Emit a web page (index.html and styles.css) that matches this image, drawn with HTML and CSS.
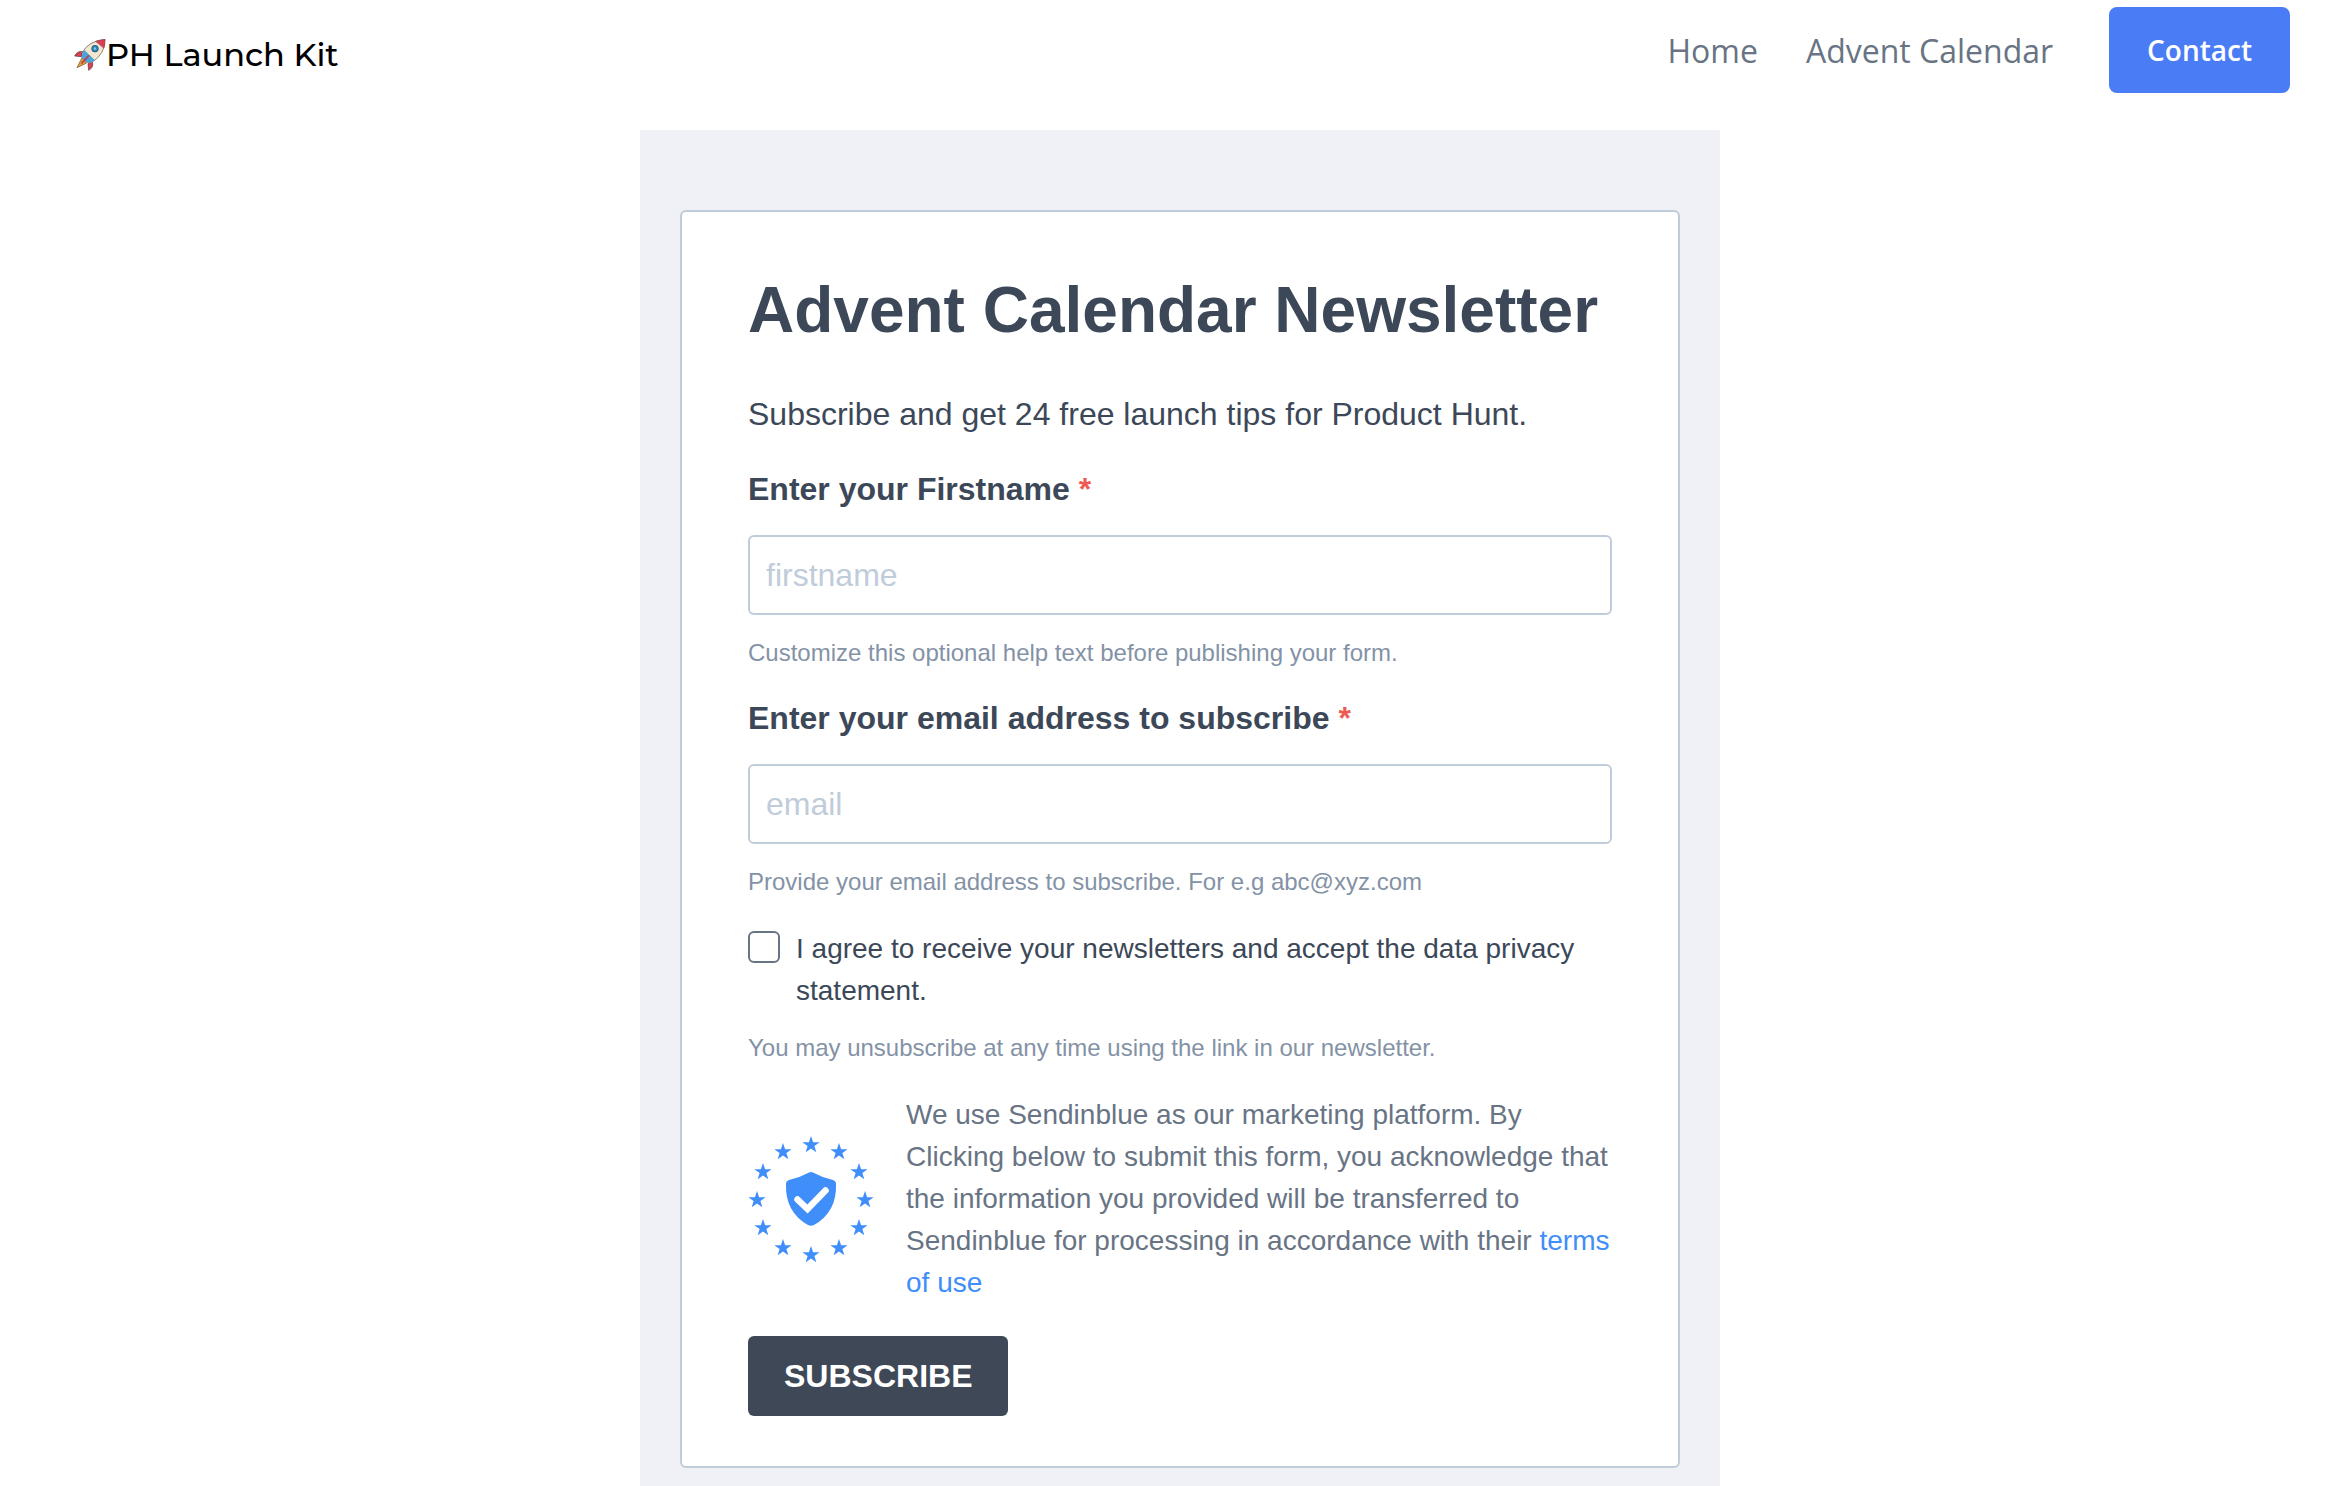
FILE: index.html
```html
<!DOCTYPE html>
<html lang="en">
<head>
  <meta charset="UTF-8">
  <meta name="viewport" content="width=device-width, initial-scale=1.0">
  <title>PH Launch Kit</title>
  <link rel="stylesheet" href="styles.css">
</head>
<body>
  <header class="navbar">
    <a class="brand" href="#">
      <svg class="brand-icon" viewBox="0 0 96 96" aria-hidden="true">
        <path d="M28 38 Q10 34 2 51 L22 53 Z" fill="#d9404f" stroke="#5b3440" stroke-width="2"/>
        <path d="M54 66 Q62 84 44 94 L42 74 Z" fill="#d9404f" stroke="#5b3440" stroke-width="2"/>
        <path d="M24 56 L9 86 L38 72 Z" fill="#e8a03c" stroke="#6b4a2b" stroke-width="2"/>
        <path d="M24 42 Q42 6 93 1 Q94 44 54 70 L40 70 L24 55 Z" fill="#f3e6cf" stroke="#5b5350" stroke-width="2"/>
        <path d="M64 7 Q80 2 93 1 Q94 14 90 28 Z" fill="#d9404f" stroke="#5b3440"/>
        <path d="M31 33 L62 63 L52 71 L38 70 L24 56 L24 44 Z" fill="#49a5d8"/>
        <circle cx="63" cy="29" r="10" fill="#2d7fae" stroke="#23506e" stroke-width="2"/>
        <circle cx="63" cy="29" r="4" fill="#7cc3e6"/>
        <path d="M45 49 L22 74" stroke="#b8404f" stroke-width="5"/>
      </svg>
      <span>PH Launch Kit</span>
    </a>
    <nav class="nav-links">
      <a href="#">Home</a>
      <a href="#">Advent Calendar</a>
      <a class="btn-contact" href="#">Contact</a>
    </nav>
  </header>

  <main class="page">
    <div class="form-wrap">
      <form class="card">
        <h1>Advent Calendar Newsletter</h1>
        <p class="intro">Subscribe and get 24 free launch tips for Product Hunt.</p>

        <!-- First name -->
        <div class="field">
          <label for="firstname">Enter your Firstname <span class="required">*</span></label>
          <input type="text" id="firstname" placeholder="firstname" required>
          <p class="help">Customize this optional help text before publishing your form.</p>
        </div>

        <!-- Email -->
        <div class="field">
          <label for="email">Enter your email address to subscribe <span class="required">*</span></label>
          <input type="email" id="email" placeholder="email" required>
          <p class="help">Provide your email address to subscribe. For e.g abc@xyz.com</p>
        </div>

        <!-- Opt-in -->
        <div class="optin">
          <input type="checkbox" id="optin">
          <label for="optin">I agree to receive your newsletters and accept the data privacy statement.</label>
        </div>
        <p class="help optin-help">You may unsubscribe at any time using the link in our newsletter.</p>

        <div class="declaration">
          <svg class="shield" viewBox="0 0 126 126" aria-hidden="true">
            <defs>
              <path id="star" d="M0 -9 L2.1 -2.8 L8.6 -2.8 L3.4 1.1 L5.3 7.3 L0 3.6 L-5.3 7.3 L-3.4 1.1 L-8.6 -2.8 L-2.1 -2.8 Z"/>
            </defs>
            <g fill="#3f8efa">
              <use href="#star" x="63" y="9"/>
              <use href="#star" x="91" y="16"/>
              <use href="#star" x="111" y="36"/>
              <use href="#star" x="117" y="64"/>
              <use href="#star" x="111" y="92"/>
              <use href="#star" x="91" y="112"/>
              <use href="#star" x="63" y="119"/>
              <use href="#star" x="35" y="112"/>
              <use href="#star" x="15" y="92"/>
              <use href="#star" x="9" y="64"/>
              <use href="#star" x="15" y="36"/>
              <use href="#star" x="35" y="16"/>
              <path d="M61 36.5 Q63 35.5 65 36.5 Q74 41.5 85 44 Q88 45 88 48 Q89 76 66 89 Q63 90.5 60 89 Q37 76 38 48 Q38 45 41 44 Q52 41.5 61 36.5 Z"/>
            </g>
            <path d="M49.5 63.5 L59.5 73 L77.500 54.5" fill="none" stroke="#fff" stroke-width="6.5" stroke-linecap="round"/>
          </svg>
          <p>We use Sendinblue as our marketing platform. By Clicking below to submit this form, you acknowledge that the information you provided will be transferred to Sendinblue for processing in accordance with their <a href="#">terms of use</a></p>
        </div>

        <button type="submit">SUBSCRIBE</button>
      </form>
    </div>
  </main>
</body>
</html>
```
FILE: styles.css
```css
* {
  box-sizing: border-box;
}
body {
  margin: 0;
  min-height: 100vh;
  display: flex;
  flex-direction: column;
  background: #fff;
  color: #3c4858;
  font-family: Helvetica, "Liberation Sans", Arial, sans-serif;
}
h1, p {
  margin: 0;
}
a {
  text-decoration: none;
}

/* Navbar */
.navbar {
  display: flex;
  justify-content: space-between;
  align-items: flex-start;
  padding: 7px 54px 37px 74px;
}
.brand {
  display: flex;
  align-items: center;
  padding-top: 27px;
  color: #000;
  font-family: Montserrat, Inter, sans-serif;
  font-size: 32px;
  font-weight: 500;
  line-height: 42px;
}
.brand-icon {
  width: 32px;
  height: 32px;
}
.nav-links {
  display: flex;
  align-items: center;
  gap: 48px;
  font-family: "Open Sans", "Noto Sans", sans-serif;
  font-size: 32px;
}
.nav-links a {
  color: #687484;
}
.nav-links .btn-contact {
  margin-left: 8px;
  padding: 22px 38px;
  border-radius: 8px;
  background: #4a7cf6;
  color: #fff;
  font-size: 28px;
  font-weight: 600;
  line-height: 42px;
}

/* Form */
.page {
  flex: 1;
  display: flex;
  justify-content: center;
  padding-left: 16px;
}
.form-wrap {
  width: 100%;
  max-width: 1080px;
  padding: 80px 40px 18px;
  background: #eff1f6;
}
.card {
  padding: 50px 66px;
  background: #fff;
  border: 2px solid #c0ccd9;
  border-radius: 6px;
}
h1 {
  margin-bottom: 32px;
  font-size: 64px;
  line-height: 96px;
}
.intro {
  margin-bottom: 27px;
  font-size: 32px;
  line-height: 48px;
}
.field {
  margin-bottom: 23px;
}
.field label {
  display: block;
  margin-bottom: 22px;
  font-size: 32px;
  font-weight: 700;
  line-height: 48px;
}
.required {
  color: #ee5a52;
}
.field input {
  display: block;
  width: 100%;
  height: 80px;
  margin-bottom: 20px;
  padding: 0 16px;
  border: 2px solid #c0ccd9;
  border-radius: 6px;
  color: #3c4858;
  font-family: inherit;
  font-size: 32px;
}
.field input::placeholder {
  color: #c0ccda;
}
.help {
  color: #8492a6;
  font-size: 24px;
  line-height: 36px;
}
.optin {
  display: flex;
  align-items: flex-start;
  gap: 16px;
  margin-bottom: 18px;
  padding-top: 5px;
  font-size: 28px;
  line-height: 42px;
}
.optin input {
  appearance: none;
  flex: none;
  width: 32px;
  height: 32px;
  margin: 3px 0 0;
  border: 2px solid #687484;
  border-radius: 6px;
  background: #fff;
}
.optin-help {
  margin-bottom: 28px;
}
.declaration {
  display: flex;
  align-items: center;
  gap: 32px;
  margin-bottom: 32px;
  color: #687484;
  font-size: 28px;
  line-height: 42px;
}
.declaration a {
  color: #3f8efa;
}
.shield {
  flex: none;
  width: 126px;
  height: 126px;
}
button {
  display: block;
  height: 80px;
  padding: 0 36px;
  border: none;
  border-radius: 6px;
  background: #3e4857;
  color: #fff;
  font-family: inherit;
  font-size: 32px;
  font-weight: 700;
  cursor: pointer;
}
```
